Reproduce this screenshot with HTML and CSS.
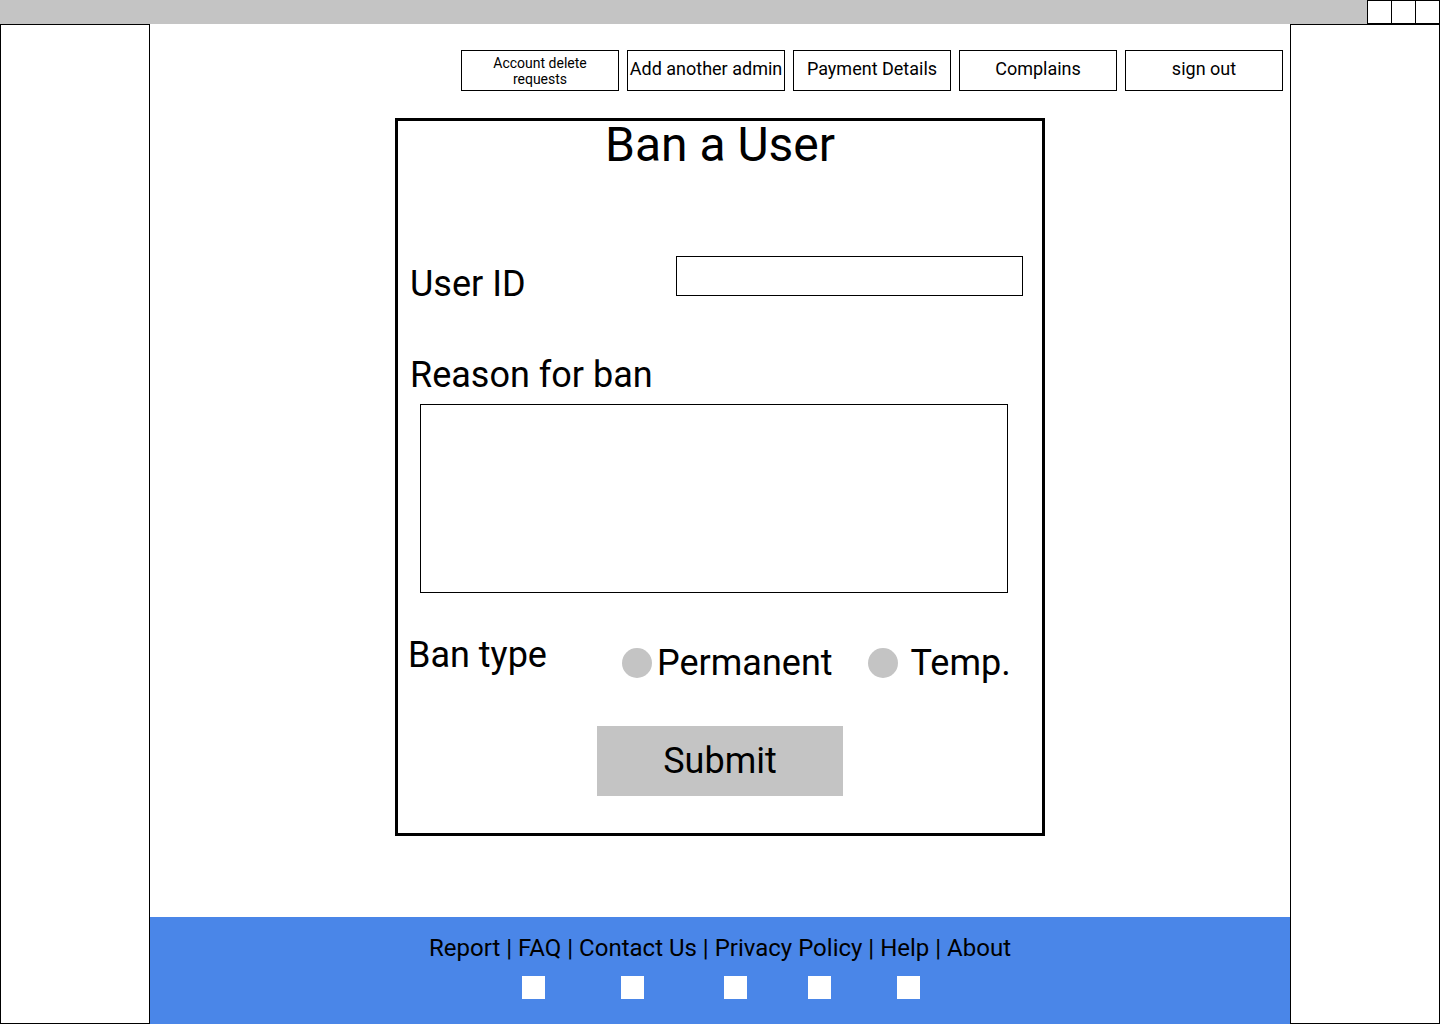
FILE: index.html
```html
<!DOCTYPE html>
<html lang="en">
<head>
    <meta charset="UTF-8">
    <meta name="viewport" content="width=device-width, initial-scale=1.0">
    <title>Ban a User</title>
    <link rel="stylesheet" href="styles.css">
</head>
<body>
    <div class="topbar">
        <div class="win-btn"></div>
        <div class="win-btn"></div>
        <div class="win-btn"></div>
    </div>
    <div class="main">
        <div class="side"></div>
        <div class="center">
            <div class="nav">
                <button class="nav-button small">Account delete<br>requests</button>
                <button class="nav-button">Add another admin</button>
                <button class="nav-button">Payment Details</button>
                <button class="nav-button">Complains</button>
                <button class="nav-button">sign out</button>
            </div>

            <div class="ban-box">
                <h1 class="title">Ban a User</h1>

                <div class="row user-row">
                    <label class="label">User ID</label>
                    <input class="text-input" type="text">
                </div>

                <label class="label reason-label">Reason for ban</label>
                <textarea class="reason"></textarea>

                <div class="row type-row">
                    <span class="label">Ban type</span>
                    <div class="options">
                        <span class="option perm"><span class="dot"></span>Permanent</span>
                        <span class="option temp"><span class="dot"></span>Temp.</span>
                    </div>
                </div>

                <button class="submit">Submit</button>
            </div>

            <div class="footer">
                <p class="links">Report | FAQ | Contact Us | Privacy Policy | Help | About</p>
                <div class="icons">
                    <span class="sq"></span>
                    <span class="sq"></span>
                    <span class="sq"></span>
                    <span class="sq"></span>
                    <span class="sq"></span>
                </div>
            </div>
        </div>
        <div class="side"></div>
    </div>
</body>
</html>
```

FILE: styles.css
```css
* {
    margin: 0;
    padding: 0;
    box-sizing: border-box;
}
body {
    font-family: Roboto, "Liberation Sans", Arial, sans-serif;
    color: #000;
    background: #fff;
    width: 1440px;
    height: 1024px;
    overflow: hidden;
}
.topbar {
    height: 24px;
    background: #c4c4c4;
    display: flex;
    justify-content: flex-end;
}
.win-btn {
    width: 25px;
    height: 24px;
    background: #fff;
    border: 1px solid #000;
    margin-left: -1px;
}
.main {
    display: flex;
    height: 1000px;
}
.side {
    width: 150px;
    border: 1px solid #000;
    background: #fff;
}
.center {
    flex: 1;
    display: flex;
    flex-direction: column;
}
.nav {
    display: flex;
    justify-content: flex-end;
    gap: 8px;
    padding: 26px 7px 0 0;
}
.nav-button {
    width: 158px;
    height: 41px;
    border: 1px solid #000;
    background: #fff;
    font-family: inherit;
    font-size: 18px;
    color: #000;
    white-space: nowrap;
    padding-bottom: 4px;
}
.nav-button.small {
    font-size: 14px;
    line-height: 16px;
    padding-bottom: 0;
    padding-top: 1px;
}
.ban-box {
    width: 650px;
    height: 718px;
    margin: 27px auto 0;
    border: 3px solid #000;
    display: flex;
    flex-direction: column;
}
.title {
    font-size: 48px;
    font-weight: 400;
    line-height: 48px;
    text-align: center;
}
.label {
    font-size: 36px;
    line-height: 40px;
}
.row {
    display: flex;
    align-items: flex-start;
}
.user-row {
    margin-top: 87px;
    padding-left: 12px;
}
.user-row .label {
    width: 266px;
    margin-top: 8px;
}
.text-input {
    width: 347px;
    height: 40px;
    border: 1px solid #000;
}
.reason-label {
    margin: 51px 0 0 12px;
}
.reason {
    width: 588px;
    height: 189px;
    margin: 9px 0 0 22px;
    border: 1px solid #000;
    resize: none;
}
.type-row {
    margin-top: 42px;
    padding-left: 10px;
}
.type-row .label {
    width: 214px;
}
.options {
    display: flex;
    margin-top: 7px;
}
.option {
    display: flex;
    align-items: center;
    font-size: 36px;
    line-height: 42px;
}
.perm .dot {
    margin-right: 5px;
}
.temp {
    margin-left: 35px;
}
.temp .dot {
    margin-right: 13px;
}
.dot {
    width: 30px;
    height: 30px;
    border-radius: 50%;
    background: #c4c4c4;
}
.submit {
    width: 246px;
    height: 70px;
    margin: 42px auto 0;
    border: none;
    background: #c4c4c4;
    font-family: inherit;
    font-size: 36px;
    color: #000;
}
.footer {
    margin-top: auto;
    height: 107px;
    background: #4a86e8;
    text-align: center;
}
.links {
    font-size: 24px;
    line-height: 28px;
    padding-top: 17px;
}
.icons {
    display: flex;
    padding-left: 372px;
    margin-top: 14px;
}
.sq {
    width: 23px;
    height: 23px;
    background: #fff;
}
.sq:nth-child(2) { margin-left: 76px; }
.sq:nth-child(3) { margin-left: 80px; }
.sq:nth-child(4) { margin-left: 61px; }
.sq:nth-child(5) { margin-left: 66px; }
```
